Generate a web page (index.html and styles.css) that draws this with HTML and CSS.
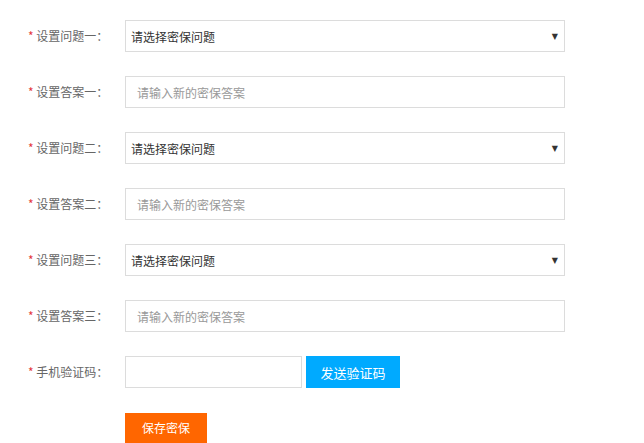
FILE: index.html
```html
<!DOCTYPE html>
<html lang="zh">
<head>
<meta charset="utf-8">
<link rel="stylesheet" href="styles.css">
</head>
<body>
<form class="form">
  <div class="row">
    <label class="label"><span class="req">*</span> 设置问题一：</label>
    <div class="select"><span>请选择密保问题</span><span class="arrow">▼</span></div>
  </div>
  <div class="row">
    <label class="label"><span class="req">*</span> 设置答案一：</label>
    <div class="input"><span class="ph">请输入新的密保答案</span></div>
  </div>
  <div class="row">
    <label class="label"><span class="req">*</span> 设置问题二：</label>
    <div class="select"><span>请选择密保问题</span><span class="arrow">▼</span></div>
  </div>
  <div class="row">
    <label class="label"><span class="req">*</span> 设置答案二：</label>
    <div class="input"><span class="ph">请输入新的密保答案</span></div>
  </div>
  <div class="row">
    <label class="label"><span class="req">*</span> 设置问题三：</label>
    <div class="select"><span>请选择密保问题</span><span class="arrow">▼</span></div>
  </div>
  <div class="row">
    <label class="label"><span class="req">*</span> 设置答案三：</label>
    <div class="input"><span class="ph">请输入新的密保答案</span></div>
  </div>
  <div class="row">
    <label class="label"><span class="req">*</span> 手机验证码：</label>
    <div class="input code"></div>
    <div class="btn send">发送验证码</div>
  </div>
  <div class="row">
    <div class="label"></div>
    <div class="btn save">保存密保</div>
  </div>
</form>
</body>
</html>
```
FILE: styles.css
```css
* { box-sizing: border-box; }
html, body { margin: 0; padding: 0; background: #fff; }
body {
  font-family: "Noto Sans CJK SC", "Liberation Sans", sans-serif;
  font-size: 12px;
  color: #666;
  overflow: hidden;
}
.form {
  padding: 20px 0 0 28px;
  display: flex;
  flex-direction: column;
  gap: 24px;
}
.row {
  display: flex;
  align-items: center;
  height: 32px;
}
.label {
  width: 97px;
  flex: none;
  color: #666;
  line-height: 32px;
}
.req { color: #e4393c; }
.select, .input {
  height: 32px;
  border: 1px solid #dcdcdc;
  display: flex;
  align-items: center;
}
.select {
  width: 440px;
  padding: 0 6px 0 5px;
  justify-content: space-between;
  color: #333;
}
.arrow {
  font-size: 8px;
  color: #333;
  font-family: "DejaVu Sans", sans-serif;
}
.input {
  width: 440px;
  padding: 0 11px;
}
.ph { color: #999; }
.input.code { width: 177px; }
.btn {
  height: 32px;
  display: flex;
  align-items: center;
  justify-content: center;
  color: #fff;
}
.send {
  width: 94px;
  margin-left: 4px;
  background: #00aaff;
  font-size: 13px;
}
.save {
  width: 82px;
  height: 30px;
  margin-top: -1px;
  background: #ff6600;
  font-size: 12px;
}
```
